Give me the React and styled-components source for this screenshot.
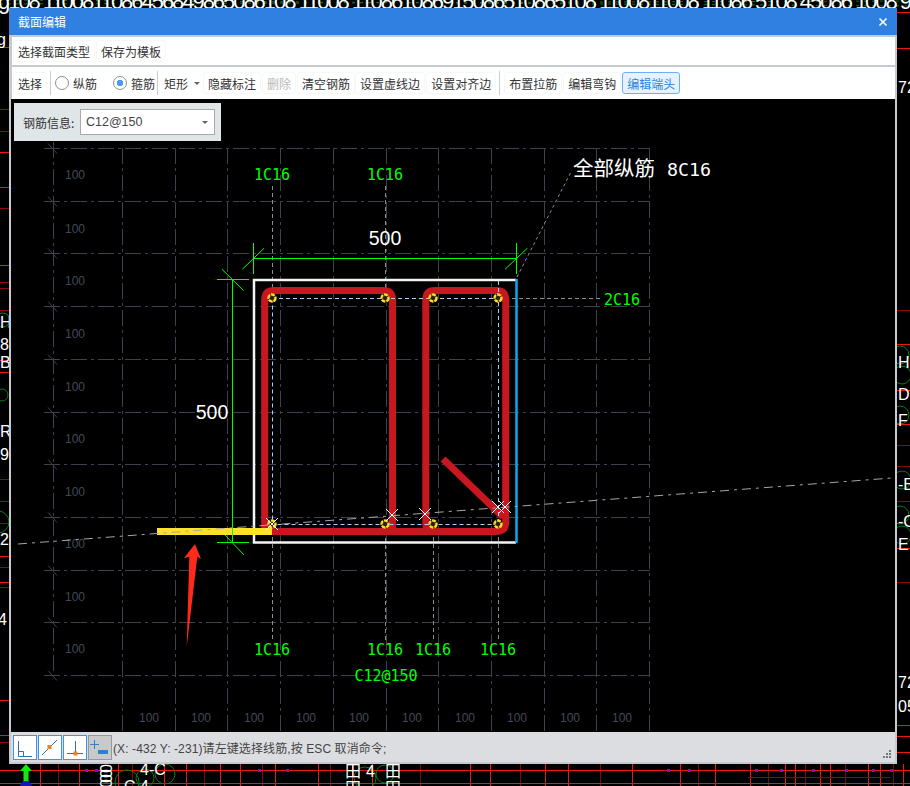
import React from 'react'
import styled, { createGlobalStyle } from 'styled-components'

const GlobalStyle = createGlobalStyle`
  html, body { margin: 0; padding: 0; background: #000; }
  body { font-family: "Liberation Sans", "Noto Sans CJK SC", sans-serif; }
`

const CJK = '"Noto Sans CJK SC", "Liberation Sans", sans-serif'

// drawing on the desktop behind the dialog
const redH = [
  [0, 9, 47, 1], [0, 9, 109, 0], [0, 9, 131, 0], [0, 9, 152, 1], [0, 9, 187, 1], [0, 9, 208, 0], [0, 9, 265, 1],
  [0, 9, 282, 0], [0, 9, 288, 0], [0, 9, 310, 0], [0, 9, 360, 1], [0, 9, 372, 1], [0, 9, 479, 0], [0, 9, 501, 0],
  [0, 9, 523, 0], [0, 9, 556, 1], [0, 9, 567, 0], [0, 9, 582, 1], [0, 9, 587, 0], [0, 9, 700, 1], [0, 9, 735, 1], [0, 9, 742, 0],
  [897, 910, 12, 1], [897, 910, 48, 1], [897, 910, 310, 0], [897, 910, 344, 1], [897, 910, 390, 1], [897, 910, 424, 1],
  [897, 910, 445, 0], [897, 910, 466, 0], [897, 910, 501, 0], [897, 910, 548, 1], [897, 910, 582, 0],
  [897, 910, 725, 1], [897, 910, 736, 1], [897, 910, 752, 1],
  [0, 910, 770, 1], [0, 910, 783, 1], [748, 890, 777, 0],
]
const redV = [40, 58, 79, 118, 132, 164, 186, 204, 220, 240, 262, 275, 318, 330, 352, 372, 420, 470, 490, 520, 545, 568, 600, 632,
  680, 698, 715, 750, 768, 785, 795, 805, 820, 830, 845, 868, 880, 893, 903]
const dotted = [85, 95, 258, 286, 667, 688, 755, 780, 812, 845, 872, 890]

const scraps = [
  [0, 328, 'H'], [0, 350, '8'], [0, 368, 'B'], [0, 437, 'R'], [0, 460, '9'], [0, 545, '2'], [-2, 625, '4'],
  [-3, 45, 'g'], [898, 368, 'H'], [898, 400, 'D'], [898, 426, 'F'], [898, 490, '-E'], [898, 527, '-C'],
  [898, 550, 'E'], [898, 93, '72'], [898, 688, '72'], [898, 712, '05'],
]
const bottomScraps = [
  [140, 775, '4-C'], [124, 792, 'C 4'], [345, 777, '田'], [366, 777, '4'], [385, 777, '田'], [345, 794, '田'], [385, 794, '田'],
]

const Backdrop = () => (
  <BackdropSvg viewBox="0 0 910 786">
    {redV.map((x, i) => (
      <line key={i} x1={x + 0.5} x2={x + 0.5} y1={764} y2={786} stroke={i % 3 === 1 ? '#7a0a0a' : '#f01414'} strokeWidth={1} />
    ))}
    {redH.map(([a, b, y, bright], i) => (
      <line key={i} x1={a} x2={b} y1={y + 0.5} y2={y + 0.5} stroke={bright ? '#f01414' : '#8a0c0c'} strokeWidth={1} />
    ))}
    {dotted.map((x) => <rect key={x} x={x} y={769} width={3} height={3} fill="#7a10c8" />)}
    <g fill="none" stroke="#0d7a18" strokeWidth={1}>
      <path d="M0 0 L910 6 M0 4 L910 1" strokeDasharray="3 5" />
      <circle cx={127} cy={782} r={12} />
      <circle cx={145} cy={778} r={9} />
      <circle cx={165} cy={774} r={10} />
      <circle cx={365} cy={778} r={11} />
      <circle cx={385} cy={774} r={9} />
      <circle cx={900} cy={355} r={9} /><circle cx={902} cy={375} r={9} /><circle cx={900} cy={415} r={9} />
      <circle cx={902} cy={480} r={9} /><circle cx={900} cy={515} r={9} /><circle cx={902} cy={535} r={9} />
      <circle cx={3} cy={320} r={7} /><circle cx={2} cy={395} r={6} /><circle cx={-2} cy={522} r={11} />
    </g>
    <TopScrap x={-2} y={9} textLength={914}>g108 1100811086456849865086108 11008 110861086915086510865108 1100811008 11086 5108 45086 1008 9</TopScrap>
    {scraps.map(([x, y, t], i) => <Scrap key={i} x={x} y={y}>{t}</Scrap>)}
    {bottomScraps.map(([x, y, t], i) => <Scrap key={i} x={x} y={y}>{t}</Scrap>)}
    <Scrap x={0} y={0} transform="translate(100 764) rotate(90)" textLength={24}>0000</Scrap>
    <path d="M26 764 L32 771 L28.5 771 L28.5 782 L23.5 782 L23.5 771 L20 771 Z" fill="#12e812" />
    <circle cx={26} cy={787} r={6} fill="#1414b4" />
  </BackdropSvg>
)

const gridX = Array.from({ length: 11 }, (_, i) => Math.round(122 + i * 52.7) + 0.5)
const gridY = Array.from({ length: 11 }, (_, i) => Math.round(148 + i * 52.7) + 0.5)
const sideLabels = [174, 228, 280, 333, 386, 438, 491, 543, 596, 648]
const footLabels = [149, 201, 254, 306, 359, 412, 465, 517, 570, 622]
const bars = [[272, 298], [385, 298], [433, 298], [498, 298], [272, 524], [385, 524], [433, 524], [498, 524]]
const crosses = [[272, 524], [392, 515], [425, 514], [498, 507], [505, 507]]
const marks = [
  ['1C16', 272, 180], ['1C16', 385, 180], ['2C16', 622, 305], ['1C16', 272, 655],
  ['1C16', 385, 655], ['1C16', 433, 655], ['1C16', 498, 655], ['C12@150', 386, 681],
]

const SectionDrawing = () => (
  <CanvasSvg width={884} height={633} viewBox="11 99 884 633">
    {/* background grid */}
    <g stroke="#3c4250" strokeWidth={1} fill="none" strokeDasharray="16 4 3 4">
      {gridY.map((y) => <line key={y} x1={44} x2={650} y1={y} y2={y} />)}
      {gridX.map((x) => <line key={x} x1={x} x2={x} y1={148} y2={732} />)}
      <line x1={53.5} x2={53.5} y1={142} y2={676} />
    </g>
    <g stroke="#3c4250" strokeWidth={1}>
      {gridY.map((y) => <line key={y} x1={48} x2={57} y1={y - 5} y2={y + 5} />)}
    </g>
    <g fill="#434958">
      {sideLabels.map((y) => <GridLabel key={y} x={75} y={y + 4.5} textAnchor="middle">100</GridLabel>)}
      {footLabels.map((x) => <GridLabel key={x} x={x} y={722} textAnchor="middle">100</GridLabel>)}
    </g>

    {/* grey guide lines through the bars */}
    <g stroke="#8d8d8d" strokeWidth={1} strokeDasharray="4 3" fill="none">
      <line x1={272.5} x2={272.5} y1={186} y2={298} />
      <line x1={385.5} x2={385.5} y1={186} y2={298} />
      <line x1={498} x2={600} y1={298.5} y2={298.5} />
      <line x1={272.5} x2={272.5} y1={530} y2={642} />
      <line x1={385.5} x2={385.5} y1={524} y2={642} />
      <line x1={433.5} x2={433.5} y1={530} y2={642} />
      <line x1={498.5} x2={498.5} y1={530} y2={642} />
      <path d="M517 277 L572 170" strokeDasharray="3 3" />
    </g>

    {/* section outline */}
    <path d="M516 280 L254 280 L254 542.5 L516 542.5" fill="none" stroke="#f4f4f4" strokeWidth={2.5} />
    <line x1={516.5} x2={516.5} y1={279} y2={543} stroke="#00aeef" strokeWidth={2.5} />

    {/* stirrups */}
    <g fill="none" stroke="#c8171f" strokeWidth={7}>
      <path d="M264.7 528 L264.7 300 Q264.7 290.4 274 290.4 L383 290.4 Q392.5 290.4 392.5 300 L392.5 531" />
      <path d="M425.8 524 Q425.8 531 433 531 M425.8 524 L425.8 300 Q425.8 290.4 435 290.4 L496 290.4 Q505.7 290.4 505.7 300 L505.7 522 Q505.7 531.4 496 531.4 L272 531.4" />
      <path d="M443 459 L503 517" />
    </g>
    <line x1={157} x2={272} y1={531.4} y2={531.4} stroke="#ffe02a" strokeWidth={7} />

    {/* inner dashed stirrup line */}
    <path d="M272 298.5 L498 298.5 M272.5 298.5 L272.5 524.5 L498 524.5 M498.5 281 L498.5 524.5" fill="none" stroke="#a9cfff" strokeWidth={1} strokeDasharray="4 3" />

    {/* dimensions */}
    <g stroke="#00ff00" strokeWidth={1} fill="none">
      <path d="M253.5 243 L253.5 274 M516.5 243 L516.5 274 M253 258.5 L516 258.5 M242.3 269.3 L264 248.3 M505 269.3 L527.3 248.3" />
      <path d="M232.5 279 L232.5 542 M217 279.5 L249 279.5 M222 269.3 L243.7 290.7 M217 542.5 L249 542.5 M225 535 L244 555" />
    </g>

    <line x1={18} x2={892} y1={544} y2={478} stroke="#a6a6a6" strokeWidth={1} strokeDasharray="9 5 3 5" />

    {/* rebars */}
    {bars.map(([x, y]) => (
      <circle key={x + '-' + y} cx={x} cy={y} r={3.5} fill="#2b2410" stroke="#ffd92a" strokeWidth={2.4} strokeDasharray="4 1" />
    ))}
    <g stroke="#fff" strokeWidth={1}>
      {crosses.map(([x, y]) => <path key={x} d={`M${x - 6} ${y - 6} L${x + 6} ${y + 6} M${x - 6} ${y + 6} L${x + 6} ${y - 6}`} />)}
    </g>

    {marks.map(([t, x, y], i) => <GreenMark key={i} x={x} y={y} textAnchor="middle">{t}</GreenMark>)}
    <DimText x={385} y={245} textAnchor="middle">500</DimText>
    <DimText x={212} y={419} textAnchor="middle">500</DimText>
    <DimText x={573} y={176}>
      <tspan fontFamily={CJK} fontSize={20.5}>全部纵筋</tspan>
      <tspan dx={12} fontFamily={'"DejaVu Sans Mono", monospace'} fontSize={18.3}>8C16</tspan>
    </DimText>

    {/* red pointer arrow */}
    <polygon points="195,544 201,559 197.3,556.7 186.7,647 189.3,556.7 184,558" fill="#ff2a1a" />
  </CanvasSvg>
)

const App = () => (
  <Desktop>
    <GlobalStyle />
    <Backdrop />
    <Dialog>
      <TitleBar>
        <span>截面编辑</span>
        <CloseIcon viewBox="0 0 10 10"><path d="M1.5 1.5 L8.5 8.5 M8.5 1.5 L1.5 8.5" /></CloseIcon>
      </TitleBar>
      <Body>
        <MenuRow>
          <Btn>选择截面类型</Btn>
          <Btn $left={1}>保存为模板</Btn>
        </MenuRow>
        <ToolRow>
          <Btn>选择</Btn>
          <Sep $left={3} />
          <RadioLabel $left={4}><Radio />纵筋</RadioLabel>
          <RadioLabel $left={16}><Radio $on />箍筋</RadioLabel>
          <Sep $left={2} />
          <ShapePick>矩形<Caret /></ShapePick>
          <Btn $left={3}>隐藏标注</Btn>
          <Btn $left={1} $off>删除</Btn>
          <Btn $left={1}>清空钢筋</Btn>
          <Btn>设置虚线边</Btn>
          <Btn $left={1}>设置对齐边</Btn>
          <Sep $left={3} />
          <Btn $left={4}>布置拉筋</Btn>
          <Btn $left={1}>编辑弯钩</Btn>
          <Btn $left={1} $active>编辑端头</Btn>
        </ToolRow>
        <Canvas>
          <SectionDrawing />
          <InfoPanel>
            <InfoLabel>钢筋信息:</InfoLabel>
            <SelectBox>C12@150<Caret /></SelectBox>
          </InfoPanel>
        </Canvas>
        <StatusBar>
          <SnapBtn>
            <svg width="24" height="25" viewBox="0 0 24 25" fill="none" stroke="#2d6fb8" strokeWidth="1">
              <path d="M5.5 6 L5.5 21.5 L19 21.5 M5.5 16.5 L10.5 16.5 L10.5 21.5" />
            </svg>
          </SnapBtn>
          <SnapBtn>
            <svg width="24" height="25" viewBox="0 0 24 25" fill="none" stroke="#2d6fb8" strokeWidth="1">
              <path d="M4 20 L19 5" />
              <rect x="9.5" y="10" width="4" height="4" fill="#f08020" stroke="none" />
            </svg>
          </SnapBtn>
          <SnapBtn>
            <svg width="24" height="25" viewBox="0 0 24 25" fill="none" stroke="#2d6fb8" strokeWidth="1">
              <path d="M4 18.5 L20 18.5 M12.5 6 L12.5 18" />
              <rect x="10.5" y="16.5" width="4" height="4" fill="#f08020" stroke="none" />
            </svg>
          </SnapBtn>
          <SnapBtn $muted>
            <svg width="24" height="25" viewBox="0 0 24 25" fill="none">
              <path d="M6.5 5 L6.5 14 M2 9.5 L11 9.5" stroke="#2d7fd8" strokeWidth="1" />
              <rect x="10" y="15" width="10" height="4" fill="#2d7fd8" />
            </svg>
          </SnapBtn>
          <StatusText>(X: -432 Y: -231)请左键选择线筋,按 ESC 取消命令;</StatusText>
          <Grip viewBox="0 0 8 8">
            <path d="M6 0h2v2H6z M3 3h2v2H3z M6 3h2v2H6z M0 6h2v2H0z M3 6h2v2H3z M6 6h2v2H6z" />
          </Grip>
        </StatusBar>
      </Body>
    </Dialog>
  </Desktop>
)

const Desktop = styled.div`
  position: relative;
  width: 910px;
  height: 786px;
  overflow: hidden;
  background: #000;
`

const BackdropSvg = styled.svg`
  position: absolute;
  top: 0;
  left: 0;
  width: 910px;
  height: 786px;
`

const TopScrap = styled.text`
  font-family: "Liberation Sans", sans-serif;
  font-size: 22px;
  fill: #fff;
`

const Scrap = styled.text`
  font-family: "Liberation Sans", "Noto Sans CJK SC", sans-serif;
  font-size: 16px;
  fill: #fff;
`

const Dialog = styled.div`
  position: absolute;
  left: 9px;
  top: 8px;
  width: 888px;
  height: 756px;
  display: flex;
  flex-direction: column;
  background: #c6c9d0;
  font-family: ${CJK};
  font-size: 12px;
  color: #333;
`

const TitleBar = styled.div`
  height: 27px;
  flex: none;
  display: flex;
  align-items: center;
  justify-content: space-between;
  padding: 0 9px;
  background: #2f80e0;
  color: #fff;
`

const CloseIcon = styled.svg`
  width: 10px;
  height: 10px;
  fill: none;
  stroke: #fff;
  stroke-width: 1.6;
`

const Body = styled.div`
  flex: 1;
  min-height: 0;
  display: flex;
  flex-direction: column;
  padding: 2px;
`

const MenuRow = styled.div`
  height: 28px;
  flex: none;
  display: flex;
  align-items: center;
  margin-left: 1px;
  padding-left: 1px;
  background: #fff;
`

const ToolRow = styled(MenuRow)`
  height: 32px;
  margin-top: 2px;
`

const Btn = styled.button`
  height: 22px;
  padding: 0 4px;
  margin-left: ${(p) => p.$left || 0}px;
  font: inherit;
  color: ${(p) => (p.$off ? '#b8b8b8' : p.$active ? '#2b84e0' : '#333')};
  background: ${(p) => (p.$active ? '#e6f2ff' : '#fff')};
  border: 1px solid ${(p) => (p.$active ? '#6ab0f5' : '#f7f7f7')};
  border-radius: 3px;
  white-space: nowrap;
`

const Sep = styled.i`
  width: 1px;
  height: 24px;
  margin-left: ${(p) => p.$left || 0}px;
  background: #ccc;
`

const RadioLabel = styled.label`
  display: flex;
  align-items: center;
  gap: 4px;
  margin-left: ${(p) => p.$left || 0}px;
  white-space: nowrap;
`

const Radio = styled.span`
  box-sizing: border-box;
  width: 14px;
  height: 14px;
  border: 1px solid #8f8f8f;
  border-radius: 50%;
  background: ${(p) => (p.$on ? 'radial-gradient(circle, #4a9bf5 0 3px, #fff 3.5px)' : '#fff')};
`

const ShapePick = styled.div`
  display: flex;
  align-items: center;
  gap: 6px;
  margin-left: 6px;
`

const Caret = styled.span`
  width: 0;
  height: 0;
  border-left: 3px solid transparent;
  border-right: 3px solid transparent;
  border-top: 3px solid #666;
`

const Canvas = styled.div`
  position: relative;
  flex: 1;
  min-height: 0;
  background: #000;
  overflow: hidden;
`

const CanvasSvg = styled.svg`
  display: block;
`

const GridLabel = styled.text`
  font-family: "Liberation Sans", sans-serif;
  font-size: 12px;
`

const GreenMark = styled.text`
  font-family: "DejaVu Sans Mono", monospace;
  font-size: 15px;
  fill: #00ff00;
`

const DimText = styled.text`
  font-family: "Liberation Sans", sans-serif;
  font-size: 19.5px;
  fill: #fff;
`

const InfoPanel = styled.div`
  position: absolute;
  left: 3px;
  top: 4px;
  width: 207px;
  height: 38px;
  box-sizing: border-box;
  display: flex;
  align-items: center;
  gap: 5px;
  padding: 0 6px 0 9px;
  background: #e0e6e8;
`

const InfoLabel = styled.span`
  width: 52px;
  white-space: nowrap;
`

const SelectBox = styled.div`
  flex: 1;
  height: 26px;
  box-sizing: border-box;
  display: flex;
  align-items: center;
  justify-content: space-between;
  padding: 0 6px 0 5px;
  background: #fff;
  border: 1px solid #aaa;
  font-family: "Liberation Sans", sans-serif;
  font-size: 12.5px;
  color: #444;
`

const StatusBar = styled.div`
  height: 30px;
  flex: none;
  position: relative;
  display: flex;
  align-items: center;
  gap: 1px;
  padding-left: 2px;
  background: #dcdde0;
`

const SnapBtn = styled.div`
  box-sizing: border-box;
  width: 24px;
  height: 25px;
  display: flex;
  align-items: center;
  justify-content: center;
  background: ${(p) => (p.$muted ? '#c9c9c9' : '#fff')};
  border: 1px solid ${(p) => (p.$muted ? '#989898' : '#3a95ee')};
  & svg { flex: none; margin: -1px; }
`

const StatusText = styled.span`
  font-family: "Liberation Sans", "Noto Sans CJK SC", sans-serif;
  font-size: 12px;
  letter-spacing: 0.1px;
  white-space: nowrap;
  color: #444;
`

const Grip = styled.svg`
  position: absolute;
  right: 4px;
  bottom: 4px;
  width: 8px;
  height: 8px;
  fill: #777;
`

export default App
